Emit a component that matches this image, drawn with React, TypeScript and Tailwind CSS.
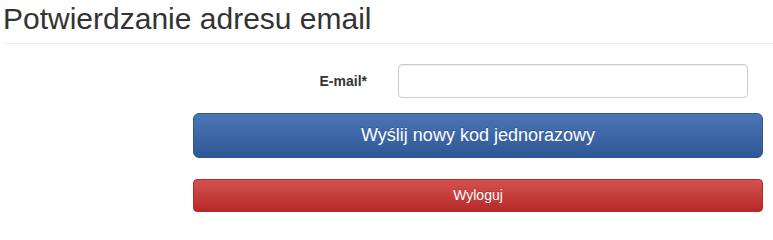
import React from 'react';

const App = () => {
  return (
    <div className="w-[773px] h-[224px] bg-white text-[#333] font-['Liberation_Sans',Arial,sans-serif] overflow-hidden">
      {/* Page header */}
      <div className="ml-[3px] pt-[2px] pb-[8px] border-b border-[#eee]">
        <h1 className="text-[30px] leading-[33px] font-normal">Potwierdzanie adresu email</h1>
      </div>

      {/* Form */}
      <form className="mt-[20px]" onSubmit={(e) => e.preventDefault()}>
        <div className="flex items-center">
          <label className="w-[383px] pr-[16px] text-right text-[14px] font-bold">E-mail*</label>
          <input
            type="email"
            className="ml-[15px] w-[350px] h-[34px] px-3 border border-[#ccc] rounded-[4px] shadow-[inset_0_1px_1px_rgba(0,0,0,0.075)] outline-none"
          />
        </div>

        <button
          type="submit"
          className="block mt-[15px] ml-[193px] w-[570px] h-[45px] rounded-[6px] border border-[#2d568f] bg-gradient-to-b from-[#4b75b6] to-[#2e5895] text-white text-[18px] [text-shadow:0_-1px_0_rgba(0,0,0,0.2)]"
        >
          Wyślij nowy kod jednorazowy
        </button>

        <button
          type="button"
          className="block mt-[21px] ml-[193px] w-[570px] h-[33px] rounded-[4px] border border-[#b32a2a] bg-gradient-to-b from-[#d4514f] to-[#b72827] text-white text-[14px] [text-shadow:0_-1px_0_rgba(0,0,0,0.2)]"
        >
          Wyloguj
        </button>
      </form>
    </div>
  );
};

export default App;
